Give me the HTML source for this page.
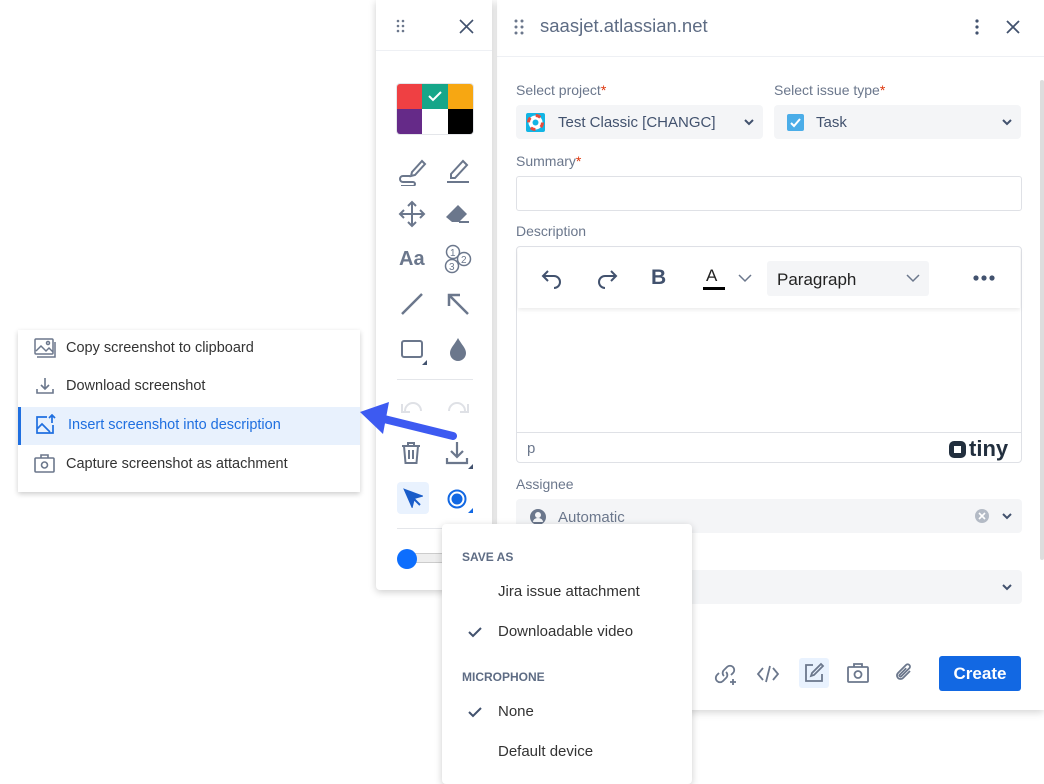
<!DOCTYPE html>
<html><head><meta charset="utf-8"><style>
*{box-sizing:border-box;margin:0;padding:0}
body{width:1044px;height:776px;overflow:hidden;background:#fff;font-family:"Liberation Sans",Arial,sans-serif;position:relative;color:#42526e}
.a{position:absolute}
.lbl{position:absolute;font-size:14px;color:#6b778c}
.lbl b{color:#de350b;font-weight:normal}
.sel{position:absolute;background:#f4f5f7;border-radius:4px;height:34px}
.mi{position:absolute;left:18px;width:342px;height:38px;font-size:14.5px;color:#333;display:flex;align-items:center;padding-left:48px}
.dm{position:absolute;left:498px;font-size:15px;color:#333}
svg{position:absolute}
</style></head><body>

<div class="a" style="left:497px;top:0;width:547px;height:710px;background:#fff;box-shadow:0 2px 8px rgba(0,0,0,.18)"></div>
<div class="a" style="left:497px;top:56px;width:547px;height:1px;background:#eef0f4"></div>
<div class="a" style="left:1040px;top:80px;width:4px;height:480px;background:#ddd;border-radius:2px"></div>
<svg style="left:514px;top:19px" width="10" height="16"><g fill="#6b778c"><circle cx="2" cy="2" r="1.5"/><circle cx="8" cy="2" r="1.5"/><circle cx="2" cy="8" r="1.5"/><circle cx="8" cy="8" r="1.5"/><circle cx="2" cy="14" r="1.5"/><circle cx="8" cy="14" r="1.5"/></g></svg>
<div class="a" style="left:540px;top:15px;font-size:18.5px;color:#5e6c84">saasjet.atlassian.net</div>
<svg style="left:972px;top:18px" width="10" height="18"><g fill="#42526e"><circle cx="5" cy="3" r="1.6"/><circle cx="5" cy="9" r="1.6"/><circle cx="5" cy="15" r="1.6"/></g></svg>
<svg style="left:1005px;top:19px" width="16" height="16"><path d="M2 2L14 14M14 2L2 14" stroke="#42526e" stroke-width="1.8"/></svg>

<div class="lbl" style="left:516px;top:82px">Select project<b>*</b></div>
<div class="lbl" style="left:774px;top:82px">Select issue type<b>*</b></div>
<div class="sel" style="left:516px;top:105px;width:247px"></div>
<svg style="left:526px;top:113px" width="19" height="19"><rect width="19" height="19" fill="#12b5e5" rx="2"/><circle cx="9.5" cy="9.5" r="7" fill="#fff"/><circle cx="9.5" cy="9.5" r="7" fill="none" stroke="#e74c3c" stroke-width="3" stroke-dasharray="5 6"/><circle cx="9.5" cy="9.5" r="3" fill="#12b5e5"/></svg>
<div class="a" style="left:558px;top:114px;font-size:15px;color:#42526e">Test Classic [CHANGC]</div>
<svg style="left:743px;top:118px" width="12" height="8"><path d="M2 2l4 4 4-4" stroke="#42526e" stroke-width="2" fill="none"/></svg>
<div class="sel" style="left:774px;top:105px;width:247px"></div>
<svg style="left:787px;top:114px" width="17" height="17"><rect width="17" height="17" rx="2" fill="#4bade8"/><path d="M4 9l3 3 6-7" stroke="#fff" stroke-width="2" fill="none"/></svg>
<div class="a" style="left:816px;top:114px;font-size:15px;color:#42526e">Task</div>
<svg style="left:1001px;top:118px" width="12" height="8"><path d="M2 2l4 4 4-4" stroke="#42526e" stroke-width="2" fill="none"/></svg>

<div class="lbl" style="left:516px;top:153px">Summary<b>*</b></div>
<div class="a" style="left:516px;top:176px;width:506px;height:35px;border:1px solid #dfe1e6;border-radius:3px"></div>
<div class="lbl" style="left:516px;top:223px">Description</div>
<div class="a" style="left:516px;top:246px;width:506px;height:217px;border:1px solid #dfe1e6;border-radius:4px"></div>
<div class="a" style="left:518px;top:248px;width:502px;height:60px;box-shadow:0 2px 4px rgba(0,0,0,.08)"></div>
<svg style="left:540px;top:266px" width="24" height="24"><path d="M8 5L3 10l5 5M3 10h11a6 6 0 0 1 0 12" stroke="#42526e" stroke-width="2" fill="none"/></svg>
<svg style="left:595px;top:266px" width="24" height="24"><path d="M16 5l5 5-5 5M21 10H10a6 6 0 0 0 0 12" stroke="#42526e" stroke-width="2" fill="none"/></svg>
<div class="a" style="left:651px;top:266px;font-size:21px;font-weight:bold;color:#42526e">B</div>
<div class="a" style="left:706px;top:266px;font-size:17px;color:#222">A</div>
<div class="a" style="left:703px;top:287px;width:22px;height:3px;background:#000"></div>
<svg style="left:737px;top:273px" width="16" height="10"><path d="M2 2l6 6 6-6" stroke="#6b778c" stroke-width="1.5" fill="none"/></svg>
<div class="a" style="left:767px;top:261px;width:162px;height:35px;background:#f4f5f7;border-radius:3px"></div>
<div class="a" style="left:777px;top:270px;font-size:17px;color:#222">Paragraph</div>
<svg style="left:905px;top:273px" width="16" height="10"><path d="M2 2l6 6 6-6" stroke="#6b778c" stroke-width="1.5" fill="none"/></svg>
<svg style="left:972px;top:274px" width="24" height="8"><g fill="#42526e"><circle cx="4" cy="4" r="2.6"/><circle cx="12" cy="4" r="2.6"/><circle cx="20" cy="4" r="2.6"/></g></svg>
<div class="a" style="left:517px;top:432px;width:504px;height:1px;background:#dfe1e6"></div>
<div class="a" style="left:527px;top:440px;font-size:15px;color:#6b778c">p</div>
<svg style="left:948px;top:440px" width="19" height="19"><rect x="1" y="1" width="17" height="17" rx="5" fill="#222f3e"/><rect x="6" y="6" width="7" height="7" fill="#fff"/></svg>
<div class="a" style="left:969px;top:436px;font-size:22px;font-weight:bold;color:#222f3e">tiny</div>

<div class="lbl" style="left:516px;top:476px">Assignee</div>
<div class="sel" style="left:516px;top:499px;width:506px"></div>
<svg style="left:529px;top:508px" width="18" height="18"><circle cx="9" cy="9" r="8" fill="#6b778c"/><circle cx="9" cy="7" r="3" fill="#f4f5f7"/><path d="M4 14a5 4 0 0 1 10 0" fill="#f4f5f7"/></svg>
<div class="a" style="left:558px;top:509px;font-size:15px;color:#6b778c">Automatic</div>
<svg style="left:974px;top:508px" width="16" height="16"><circle cx="8" cy="8" r="7" fill="#b3bac5"/><path d="M5 5l6 6M11 5l-6 6" stroke="#fff" stroke-width="1.6"/></svg>
<svg style="left:1001px;top:512px" width="12" height="8"><path d="M2 2l4 4 4-4" stroke="#42526e" stroke-width="2" fill="none"/></svg>
<div class="sel" style="left:516px;top:570px;width:506px"></div>
<svg style="left:1001px;top:583px" width="12" height="8"><path d="M2 2l4 4 4-4" stroke="#42526e" stroke-width="2" fill="none"/></svg>

<svg style="left:714px;top:662px" width="24" height="24"><g stroke="#6b778c" stroke-width="1.8" fill="none"><path d="M10 14a4 4 0 0 1 0-6l3-3a4 4 0 0 1 6 6l-2 2M12 10a4 4 0 0 1 0 6l-3 3a4 4 0 0 1-6-6l2-2M19 17v6M16 20h6"/></g></svg>
<svg style="left:756px;top:663px" width="24" height="22"><path d="M7 5l-5 6 5 6M17 5l5 6-5 6M14 3l-4 16" stroke="#6b778c" stroke-width="1.8" fill="none"/></svg>
<div class="a" style="left:799px;top:658px;width:30px;height:30px;background:#e9f2fe;border-radius:3px"></div>
<svg style="left:803px;top:662px" width="22" height="22"><g stroke="#6b778c" stroke-width="1.8" fill="none"><path d="M10 3H3v16h16v-7"/><path d="M18 2l2 2-9 9-3 1 1-3z"/></g></svg>
<svg style="left:846px;top:662px" width="24" height="22"><g stroke="#6b778c" stroke-width="1.8" fill="none"><rect x="2" y="5" width="20" height="15" rx="1"/><path d="M8 5V2h8v3"/><circle cx="12" cy="12.5" r="3.5"/></g></svg>
<svg style="left:892px;top:661px" width="24" height="24"><path d="M18 10l-7 7a3.5 3.5 0 0 1-5-5l8-8a2.3 2.3 0 0 1 3.3 3.3l-8 8a1 1 0 0 1-1.6-1.6l6.5-6.5" stroke="#6b778c" stroke-width="1.8" fill="none"/></svg>
<div class="a" style="left:939px;top:656px;width:82px;height:35px;background:#1268e3;border-radius:3px;color:#fff;font-size:17px;font-weight:bold;text-align:center;line-height:35px">Create</div>

<div class="a" style="left:376px;top:0;width:116px;height:590px;background:#fff;box-shadow:0 2px 8px rgba(0,0,0,.2);border-radius:0 0 4px 4px"></div>
<div class="a" style="left:376px;top:50px;width:116px;height:1px;background:#eef0f4"></div>
<svg style="left:396px;top:19px" width="10" height="14"><g fill="#6b778c"><circle cx="2" cy="2" r="1.3"/><circle cx="7" cy="2" r="1.3"/><circle cx="2" cy="7" r="1.3"/><circle cx="7" cy="7" r="1.3"/><circle cx="2" cy="12" r="1.3"/><circle cx="7" cy="12" r="1.3"/></g></svg>
<svg style="left:459px;top:19px" width="15" height="15"><path d="M1 1L14 14M14 1L1 14" stroke="#42526e" stroke-width="1.6"/></svg>
<div class="a" style="left:397px;top:84px;width:76px;height:50px;border-radius:3px;overflow:hidden;box-shadow:0 0 0 1px #e4e6ea">
<div class="a" style="left:0;top:0;width:25px;height:25px;background:#ef4043"></div>
<div class="a" style="left:25px;top:0;width:26px;height:25px;background:#16a689"></div>
<div class="a" style="left:51px;top:0;width:25px;height:25px;background:#f7a712"></div>
<div class="a" style="left:0;top:25px;width:25px;height:25px;background:#652a88"></div>
<div class="a" style="left:25px;top:25px;width:26px;height:25px;background:#fff"></div>
<div class="a" style="left:51px;top:25px;width:25px;height:25px;background:#000"></div>
<svg style="left:30px;top:6px" width="16" height="12"><path d="M2 6l4 4 8-8" stroke="#fff" stroke-width="2" fill="none"/></svg>
</div>
<svg style="left:398px;top:156px" width="30" height="30"><g stroke="#6b778c" stroke-width="2" fill="none"><path d="M14 16l10-11 3 3-10 11-4 1z"/><path d="M12 20H5a3 3 0 0 0 0 6h10a2 2 0 0 1 0 4H3"/></g></svg>
<svg style="left:443px;top:156px" width="30" height="28"><g stroke="#6b778c" stroke-width="2" fill="none"><path d="M8 18l12-13 4 4-12 13H8z"/><path d="M4 26h22"/></g></svg>
<svg style="left:398px;top:200px" width="28" height="28"><g stroke="#6b778c" stroke-width="2" fill="none"><path d="M14 2v24M2 14h24M10 6l4-4 4 4M10 22l4 4 4-4M6 10l-4 4 4 4M22 10l4 4-4 4"/></g></svg>
<svg style="left:443px;top:201px" width="28" height="26"><path d="M3 16L15 4l9 9-8 8H9z" fill="#6b778c"/><path d="M16 21h10" stroke="#6b778c" stroke-width="2"/></svg>
<div class="a" style="left:399px;top:248px;font-size:20px;font-weight:bold;color:#6b778c">Aa</div>
<svg style="left:441px;top:244px" width="32" height="30"><g stroke="#6b778c" stroke-width="1.5" fill="#fff"><circle cx="12" cy="8" r="6.5"/><circle cx="23" cy="15" r="6.5"/><circle cx="11" cy="22" r="6.5"/></g><g font-size="10" fill="#6b778c" font-family="Liberation Sans"><text x="9" y="12">1</text><text x="20" y="19">2</text><text x="8" y="26">3</text></g></svg>
<svg style="left:400px;top:292px" width="24" height="24"><path d="M2 22L22 2" stroke="#6b778c" stroke-width="2.5"/></svg>
<svg style="left:446px;top:292px" width="24" height="24"><path d="M22 22L4 4M3 14V3h11" stroke="#6b778c" stroke-width="2.5" fill="none"/></svg>
<svg style="left:400px;top:338px" width="28" height="28"><rect x="2" y="3" width="20" height="16" rx="2" stroke="#6b778c" stroke-width="2" fill="none"/><path d="M27 22v5h-5z" fill="#42526e"/></svg>
<svg style="left:447px;top:336px" width="22" height="26"><path d="M11 2C8 8 3 12 3 17a8 8 0 0 0 16 0c0-5-5-9-8-15z" fill="#6b778c"/></svg>
<div class="a" style="left:397px;top:379px;width:76px;height:1px;background:#e4e6ea"></div>
<svg style="left:399px;top:399px" width="26" height="20"><path d="M6 12a8 8 0 0 1 16 0M3 5v8h8" stroke="#dfe1e6" stroke-width="2" fill="none"/></svg>
<svg style="left:445px;top:399px" width="26" height="20"><path d="M20 12a8 8 0 0 0-16 0M23 5v8h-8" stroke="#dfe1e6" stroke-width="2" fill="none"/></svg>
<svg style="left:400px;top:441px" width="22" height="24"><g stroke="#6b778c" stroke-width="2" fill="none"><path d="M2 5h18M8 5V2h6v3M4 5l1.5 17h11L18 5M9 9v9M13 9v9"/></g></svg>
<svg style="left:444px;top:440px" width="30" height="30"><g stroke="#6b778c" stroke-width="2.2" fill="none"><path d="M13 2v15M7 11l6 6 6-6M3 18v5h20v-5"/></g><path d="M29 24v5h-5z" fill="#42526e"/></svg>
<div class="a" style="left:397px;top:482px;width:32px;height:32px;background:#e9f2fe;border-radius:4px"></div>
<svg style="left:403px;top:488px" width="20" height="20"><path d="M2 2l16 6-7 2-2 8z M10 10l7 7" fill="#1a5dc9" stroke="#1a5dc9" stroke-width="2"/></svg>
<svg style="left:446px;top:487px" width="28" height="28"><circle cx="11" cy="12" r="8.5" stroke="#1268e3" stroke-width="2" fill="none"/><circle cx="11" cy="12" r="5.5" fill="#1268e3"/><path d="M27 21v5h-5z" fill="#1268e3"/></svg>
<div class="a" style="left:397px;top:528px;width:76px;height:1px;background:#e4e6ea"></div>
<div class="a" style="left:405px;top:553px;width:40px;height:10px;background:#eee;border:1px solid #ccc;border-radius:3px"></div>
<div class="a" style="left:397px;top:549px;width:20px;height:20px;background:#0d6efd;border-radius:50%"></div>

<div class="a" style="left:18px;top:330px;width:342px;height:162px;background:#fff;box-shadow:0 2px 5px rgba(0,0,0,.2)"></div>
<div class="a" style="left:18px;top:407px;width:342px;height:38px;background:#e8f1fd;border-left:3px solid #1f6fe0"></div>
<div class="mi" style="top:329px">Copy screenshot to clipboard</div>
<div class="mi" style="top:367px">Download screenshot</div>
<div class="mi" style="top:406px;color:#1f6fe0;padding-left:50px">Insert screenshot into description</div>
<div class="mi" style="top:445px">Capture screenshot as attachment</div>
<svg style="left:34px;top:338px" width="22" height="20"><g stroke="#6b778c" stroke-width="1.5" fill="none"><rect x="1" y="1" width="18" height="15" rx="1"/><path d="M3 19h18V4M2 13l5-5 5 5 3-3 4 4"/><circle cx="14" cy="5" r="1.5"/></g></svg>
<svg style="left:36px;top:377px" width="18" height="18"><g stroke="#6b778c" stroke-width="1.6" fill="none"><path d="M9 1v11M5 8l4 4 4-4M1 12v4h16v-4"/></g></svg>
<svg style="left:35px;top:414px" width="22" height="22"><g stroke="#1f6fe0" stroke-width="1.7" fill="none"><path d="M12 3H2v16h16v-8M2 15l5-5 8 8M17 1v8M14 4l3-3 3 3"/></g></svg>
<svg style="left:34px;top:454px" width="22" height="20"><g stroke="#6b778c" stroke-width="1.6" fill="none"><rect x="1" y="4" width="19" height="14" rx="1"/><path d="M7 4V1h7v3"/><circle cx="10.5" cy="11" r="3"/></g></svg>

<svg style="left:355px;top:398px" width="110" height="50"><path d="M98 38L25 20" stroke="#3d5af1" stroke-width="8" stroke-linecap="round"/><path d="M5 14L34 4 28 36z" fill="#3d5af1"/></svg>

<div class="a" style="left:442px;top:524px;width:250px;height:260px;background:#fff;border-radius:4px;box-shadow:0 2px 8px rgba(0,0,0,.2)"></div>
<div class="a" style="left:462px;top:550px;font-size:12px;font-weight:bold;color:#5e6c84">SAVE AS</div>
<div class="dm" style="top:583px">Jira issue attachment</div>
<div class="dm" style="top:623px">Downloadable video</div>
<div class="a" style="left:462px;top:670px;font-size:12px;font-weight:bold;color:#5e6c84">MICROPHONE</div>
<div class="dm" style="top:703px">None</div>
<div class="dm" style="top:743px">Default device</div>
<svg style="left:468px;top:626px" width="14" height="12"><path d="M1 6l4 4 8-8" stroke="#42526e" stroke-width="2" fill="none"/></svg>
<svg style="left:468px;top:706px" width="14" height="12"><path d="M1 6l4 4 8-8" stroke="#42526e" stroke-width="2" fill="none"/></svg>
</body></html>
